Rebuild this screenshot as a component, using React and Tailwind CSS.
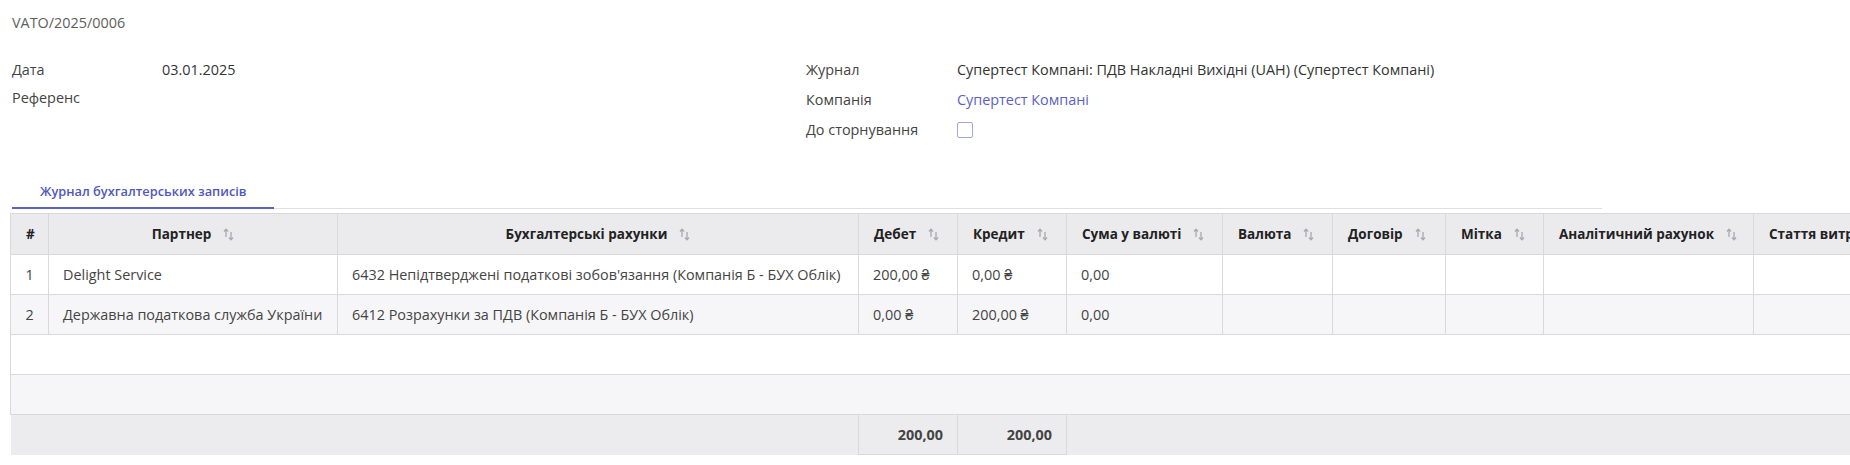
import React from "react";

function SortIcon() {
  return (
    <svg width="11" height="13" viewBox="0 0 11 13" className="inline-block shrink-0" fill="none" stroke="#a9a9ad" strokeWidth="1.3">
      <path d="M3 9V1.5" />
      <path d="M1 3.5L3 1.2L5 3.5" />
      <path d="M8 4V11.5" />
      <path d="M6 9.5L8 11.8L10 9.5" />
    </svg>
  );
}

const cols = [
  { w: "w-[38px]", label: "#", align: "center", sort: false },
  { w: "w-[289px]", label: "Партнер", align: "center", sort: true },
  { w: "w-[521px]", label: "Бухгалтерські рахунки", align: "center", sort: true },
  { w: "w-[99px]", label: "Дебет", align: "left", sort: true },
  { w: "w-[109px]", label: "Кредит", align: "left", sort: true },
  { w: "w-[156px]", label: "Сума у валюті", align: "left", sort: true },
  { w: "w-[110px]", label: "Валюта", align: "left", sort: true },
  { w: "w-[113px]", label: "Договір", align: "left", sort: true },
  { w: "w-[98px]", label: "Мітка", align: "left", sort: true },
  { w: "w-[210px]", label: "Аналітичний рахунок", align: "left", sort: true },
  { w: "w-[240px]", label: "Стаття витрат", align: "left", sort: true },
];

const rows = [
  ["1", "Delight Service", "6432 Непідтверджені податкові зобов'язання (Компанія Б - БУХ Облік)", "200,00 ₴", "0,00 ₴", "0,00", "", "", "", "", ""],
  ["2", "Державна податкова служба України", "6412 Розрахунки за ПДВ (Компанія Б - БУХ Облік)", "0,00 ₴", "200,00 ₴", "0,00", "", "", "", "", ""],
];

export default function App() {
  return (
    <div className="w-[1850px] h-[465px] overflow-hidden bg-white font-['Open_Sans',sans-serif] text-[14.4px] text-[#444]">
      <div className="pl-[10px]">
        <div className="pl-[2px] pt-[13px] leading-[20px] text-[#5e5e5e]">VATO/2025/0006</div>

        <div className="flex pl-[2px] mt-[22px]">
          <div className="w-[794px] pt-[1px]">
            <div className="flex h-[28px] items-center">
              <div className="w-[150px] text-[#444]">Дата</div>
              <div className="text-[#333]">03.01.2025</div>
            </div>
            <div className="flex h-[28px] items-center">
              <div className="w-[150px] text-[#444]">Референс</div>
            </div>
          </div>
          <div>
            <div className="flex h-[30px] items-center">
              <div className="w-[151px] text-[#444]">Журнал</div>
              <div className="text-[#333]">Супертест Компані: ПДВ Накладні Вихідні (UAH) (Супертест Компані)</div>
            </div>
            <div className="flex h-[30px] items-center">
              <div className="w-[151px] text-[#444]">Компанія</div>
              <div className="text-[#5a62c2]">Супертест Компані</div>
            </div>
            <div className="flex h-[30px] items-center">
              <div className="w-[151px] text-[#444]">До сторнування</div>
              <div className="w-[16px] h-[16px] rounded-[2px] border-[1.5px] border-[#a3a7dd] bg-white" />
            </div>
          </div>
        </div>

        <div className="ml-[2px] mt-[25px] flex w-[1590px] border-b border-[#e1e1e4]">
          <div className="w-[262px] pl-[28px] pt-[11px] pb-[6px] -mb-px border-b-[2px] border-[#5a62c4] text-[12.8px] font-semibold leading-[20px] text-[#4f58bd]">
            Журнал бухгалтерських записів
          </div>
        </div>

        <div className="mt-[4px]">
          <table className="table-fixed border-collapse w-[1983px]">
            <colgroup>
              {cols.map((c, i) => (
                <col key={i} className={c.w} />
              ))}
            </colgroup>
            <thead>
              <tr className="bg-[#ebebee]">
                {cols.map((c, i) => (
                  <th
                    key={i}
                    className={
                      "h-[41px] border border-[#d9d9dc] px-[15px] text-[13.5px] font-bold text-[#222] whitespace-nowrap overflow-hidden " +
                      (c.align === "center" ? "text-center" : "text-left")
                    }
                  >
                    <span className="inline-flex items-center gap-[12px]">
                      {c.label}
                      {c.sort && <SortIcon />}
                    </span>
                  </th>
                ))}
              </tr>
            </thead>
            <tbody>
              {rows.map((r, ri) => (
                <tr key={ri} className={ri % 2 === 1 ? "bg-[#f6f6f8]" : "bg-white"}>
                  {r.map((v, ci) => (
                    <td
                      key={ci}
                      className={
                        "h-[40px] border border-[#d9d9dc] whitespace-nowrap overflow-hidden " +
                        (ci === 0 ? "text-center" : "px-[14px]")
                      }
                    >
                      {v}
                    </td>
                  ))}
                </tr>
              ))}
              <tr className="bg-white">
                <td colSpan={11} className="h-[40px] border border-[#d9d9dc]" />
              </tr>
              <tr className="bg-[#f6f6f8]">
                <td colSpan={11} className="h-[40px] border border-[#d9d9dc]" />
              </tr>
              <tr className="bg-[#ececee]">
                <td colSpan={3} className="h-[40px] border-t border-[#d9d9dc]" />
                <td className="h-[40px] border border-[#d9d9dc] pr-[14px] text-right font-bold text-[#444]">200,00</td>
                <td className="h-[40px] border border-[#d9d9dc] pr-[14px] text-right font-bold text-[#444]">200,00</td>
                <td colSpan={6} className="h-[40px] border-t border-[#d9d9dc]" />
              </tr>
            </tbody>
          </table>
        </div>
      </div>
    </div>
  );
}
